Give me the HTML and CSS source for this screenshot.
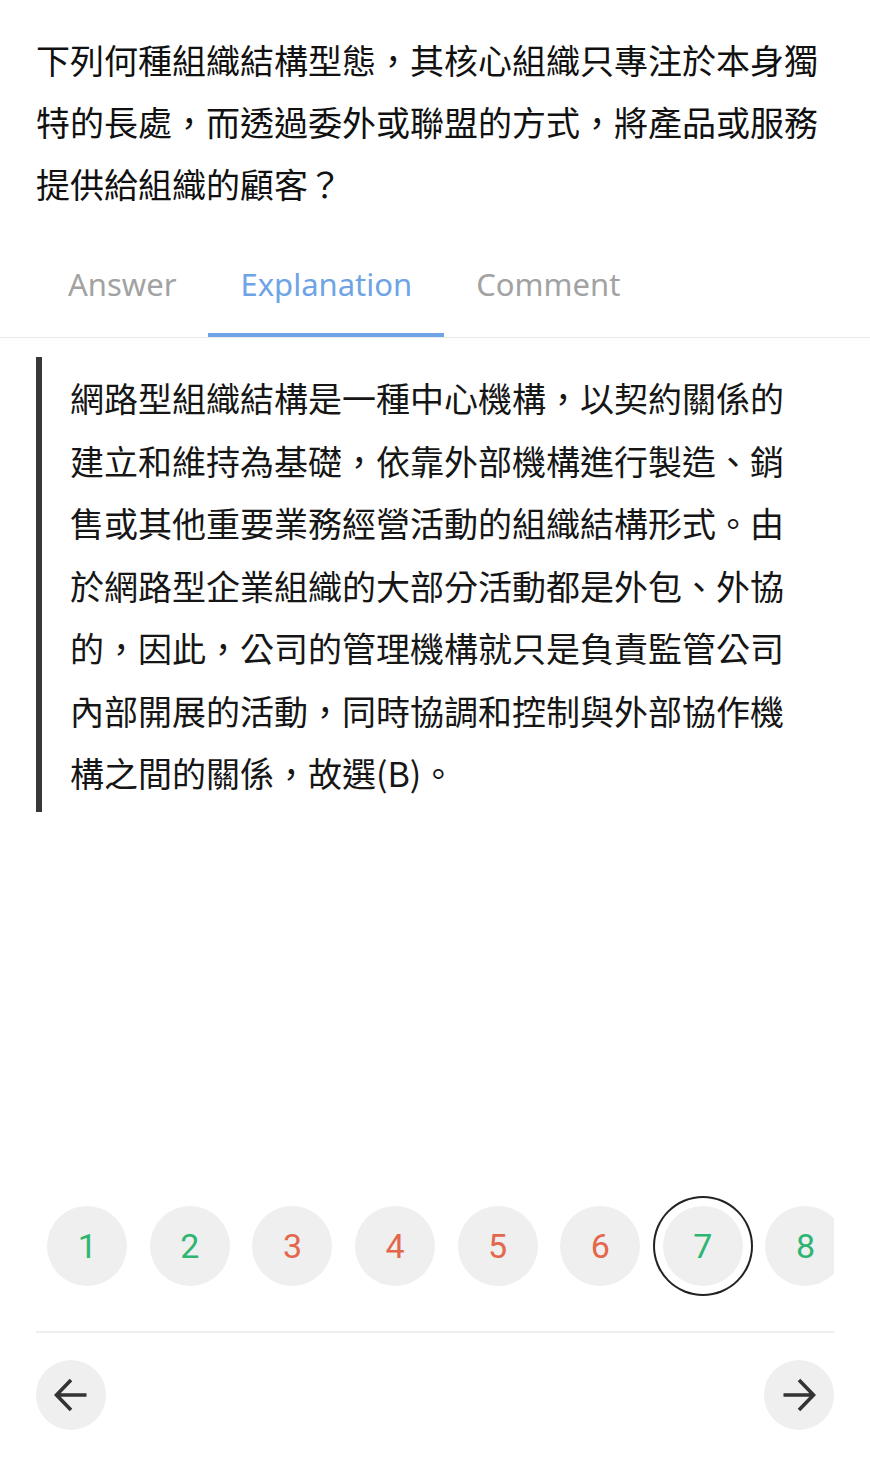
FILE: index.html
```html
<!DOCTYPE html>
<html lang="zh-Hant">
<head>
<meta charset="utf-8">
<title>Explanation</title>
<link rel="stylesheet" href="styles.css">
</head>
<body>
<div class="page">
  <main class="main">
    <p class="question">下列何種組織結構型態，其核心組織只專注於本身獨特的長處，而透過委外或聯盟的方式，將產品或服務提供給組織的顧客？</p>
    <nav class="tabs">
      <span class="tab">Answer</span>
      <span class="tab tab-active">Explanation</span>
      <span class="tab">Comment</span>
    </nav>
    <blockquote class="explain">網路型組織結構是一種中心機構，以契約關係的建立和維持為基礎，依靠外部機構進行製造、銷售或其他重要業務經營活動的組織結構形式。由於網路型企業組織的大部分活動都是外包、外協的，因此，公司的管理機構就只是負責監管公司內部開展的活動，同時協調和控制與外部協作機構之間的關係，故選(B)。</blockquote>
  </main>
  <footer class="footer">
    <div class="nums">
      <div class="num-item"><span class="num ok">1</span></div>
      <div class="num-item"><span class="num ok">2</span></div>
      <div class="num-item"><span class="num bad">3</span></div>
      <div class="num-item"><span class="num bad">4</span></div>
      <div class="num-item"><span class="num bad">5</span></div>
      <div class="num-item"><span class="num bad">6</span></div>
      <div class="num-item"><span class="num ok current">7</span></div>
      <div class="num-item"><span class="num ok">8</span></div>
    </div>
    <div class="divider"></div>
    <div class="arrows">
      <button class="arrow" aria-label="previous">
        <svg width="34" height="34" viewBox="0 0 34 34"><path d="M32.5 17H2.5M17 2L2.5 17L17 32" fill="none" stroke="#333" stroke-width="3.6" stroke-linejoin="miter"/></svg>
      </button>
      <button class="arrow" aria-label="next">
        <svg width="34" height="34" viewBox="0 0 34 34"><path d="M1.5 17H31.5M17 2L31.5 17L17 32" fill="none" stroke="#333" stroke-width="3.6" stroke-linejoin="miter"/></svg>
      </button>
    </div>
  </footer>
</div>
</body>
</html>
```

FILE: styles.css
```css
* { box-sizing: border-box; }
html, body { margin: 0; padding: 0; background: #fff; }
body {
  font-family: "Noto Sans CJK TC", "Noto Sans", sans-serif;
  color: #111;
}
.page {
  min-height: 1474px;
  display: flex;
  flex-direction: column;
}
.main { flex: 1; }
.question {
  margin: 29px 36px 0;
  font-size: 34px;
  line-height: 62px;
  color: #111;
}
.tabs {
  display: flex;
  padding: 0 36px;
  border-bottom: 1px solid #e9e9e9;
}
.tab {
  padding: 49px 32px 29px;
  line-height: 40px;
  font-family: "Noto Sans", "Liberation Sans", sans-serif;
  font-size: 31px;
  color: #a2a2a2;
  border-bottom: 4px solid transparent;
}
.tab-active {
  color: #6ea4e6;
  border-bottom-color: #6ea4e6;
}
.explain {
  margin: 19px 36px 0;
  padding: 10px 34px 7px 28px;
  border-left: 6px solid #38383a;
  font-size: 34px;
  line-height: 62.5px;
  color: #161616;
}
.footer {
  padding: 0 36px 44px;
}
.nums {
  display: flex;
  overflow: hidden;
  height: 100px;
  align-items: center;
}
.num-item {
  flex: 0 0 102.6px;
  display: flex;
  justify-content: center;
}
.num {
  width: 80px;
  height: 80px;
  border-radius: 50%;
  background: #efefef;
  display: flex;
  align-items: center;
  justify-content: center;
  font-family: Roboto, "Liberation Sans", sans-serif;
  font-size: 34px;
}
.ok { color: #2db572; }
.bad { color: #e4664c; }
.current {
  box-shadow: 0 0 0 8px #fff, 0 0 0 10px #222;
}
.divider {
  margin-top: 35px;
  height: 2px;
  background: #efefef;
}
.arrows {
  margin-top: 27px;
  display: flex;
  justify-content: space-between;
}
.arrow {
  width: 70px;
  height: 70px;
  border-radius: 50%;
  border: none;
  background: #efefef;
  padding: 0;
  display: flex;
  align-items: center;
  justify-content: center;
}
```
